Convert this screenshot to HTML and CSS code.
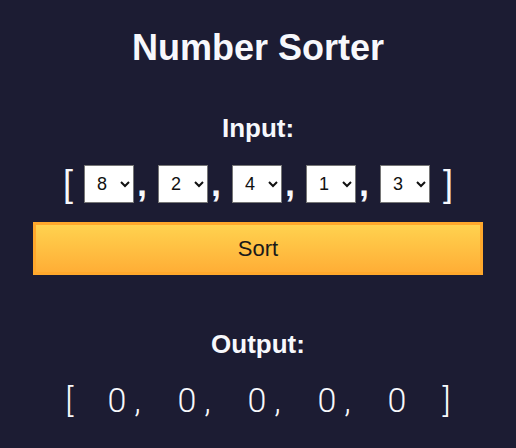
FILE: index.html
```html
<!DOCTYPE html>
<html lang="en">
<head>
<meta charset="utf-8">
<title>Number Sorter</title>
<link rel="stylesheet" href="styles.css">
</head>
<body>
<main class="app">
  <h1 class="title">Number Sorter</h1>
  <h2 class="label label-input">Input:</h2>
  <div class="input-row">
    <span class="bracket bracket-open">[</span>
    <select class="num"><option>8</option></select><span class="comma">,</span>
    <select class="num"><option>2</option></select><span class="comma">,</span>
    <select class="num"><option>4</option></select><span class="comma">,</span>
    <select class="num"><option>1</option></select><span class="comma">,</span>
    <select class="num"><option>3</option></select>
    <span class="bracket bracket-close">]</span>
  </div>
  <button class="sort-btn" type="button">Sort</button>
  <h2 class="label label-output">Output:</h2>
  <div class="output-row">
    <span class="obr obr-open">[</span>
    <span class="oval">0<span class="ocomma">,</span></span>
    <span class="oval">0<span class="ocomma">,</span></span>
    <span class="oval">0<span class="ocomma">,</span></span>
    <span class="oval">0<span class="ocomma">,</span></span>
    <span class="oval oval-last">0</span>
    <span class="obr">]</span>
  </div>
</main>
</body>
</html>
```

FILE: styles.css
```css
html, body {
  margin: 0;
  padding: 0;
  background: #1c1c33;
}
body {
  font-family: "Liberation Sans", Arial, sans-serif;
  color: #f7f8fc;
}
.app {
  width: 450px;
  margin: 0 auto;
  padding-top: 30px;
  display: flex;
  flex-direction: column;
  align-items: center;
}
.title {
  margin: 0;
  font-size: 36px;
  line-height: 1;
  font-weight: bold;
}
.label {
  margin: 0;
  font-size: 26px;
  line-height: 1;
  font-weight: bold;
}
.label-input {
  margin-top: 49px;
}
.input-row {
  margin-top: 24px;
  height: 38px;
  display: flex;
  align-items: center;
  font-size: 36px;
  line-height: 1;
}
.bracket-open {
  margin-right: 11px;
}
.bracket-close {
  margin-left: 13px;
}
.comma {
  display: inline-block;
  width: 24px;
  padding-left: 3px;
  box-sizing: border-box;
  font-weight: bold;
}
.num {
  width: 50px;
  height: 38px;
  box-sizing: border-box;
  margin: 0;
  padding: 0 4px 0 8px;
  font-family: "Liberation Sans", Arial, sans-serif;
  font-size: 18px;
  color: #111;
  background: #fff;
  border: 1px solid #767676;
  border-radius: 0;
}
.sort-btn {
  margin-top: 19px;
  width: 450px;
  box-sizing: border-box;
  padding: 11px 0;
  border: 3px solid #ffa82c;
  background: linear-gradient(#ffd24f, #ffae36);
  font-family: "Liberation Sans", Arial, sans-serif;
  font-size: 22px;
  line-height: 25px;
  color: #1a1a1a;
}
.label-output {
  margin-top: 56px;
}
.output-row {
  margin-top: 26px;
  display: flex;
  align-items: baseline;
  font-family: Roboto, "Open Sans", sans-serif;
  font-weight: 300;
  font-size: 34px;
  line-height: 1;
}
.obr-open {
  margin-right: 34px;
}
.oval {
  width: 70px;
}
.ocomma {
  margin-left: 8px;
}
.oval-last {
  width: 55px;
}
```
